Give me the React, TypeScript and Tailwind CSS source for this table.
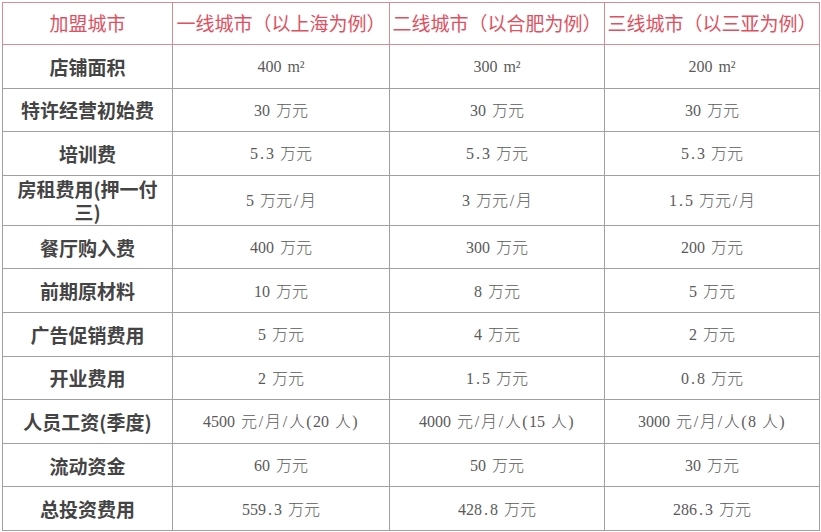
import React from "react";

type Row = { label: React.ReactNode; a: string; b: string; c: string; tall?: boolean };

const rows: Row[] = [
  { label: "店铺面积", a: "400 m²", b: "300 m²", c: "200 m²" },
  { label: "特许经营初始费", a: "30 万元", b: "30 万元", c: "30 万元" },
  { label: "培训费", a: "5.3 万元", b: "5.3 万元", c: "5.3 万元" },
  {
    label: (
      <>
        房租费用(押一付
        <br />
        三)
      </>
    ),
    a: "5 万元/月",
    b: "3 万元/月",
    c: "1.5 万元/月",
    tall: true,
  },
  { label: "餐厅购入费", a: "400 万元", b: "300 万元", c: "200 万元" },
  { label: "前期原材料", a: "10 万元", b: "8 万元", c: "5 万元" },
  { label: "广告促销费用", a: "5 万元", b: "4 万元", c: "2 万元" },
  { label: "开业费用", a: "2 万元", b: "1.5 万元", c: "0.8 万元" },
  { label: "人员工资(季度)", a: "4500 元/月/人(20 人)", b: "4000 元/月/人(15 人)", c: "3000 元/月/人(8 人)" },
  { label: "流动资金", a: "60 万元", b: "50 万元", c: "30 万元" },
  { label: "总投资费用", a: "559.3 万元", b: "428.8 万元", c: "286.3 万元" },
];

const sans = { fontFamily: '"Noto Sans CJK SC", sans-serif' };
const serif = { fontFamily: '"Liberation Serif", serif' };

// digits and punctuation sit in 8px slots, like the Song face in the shot
function Value({ text }: { text: string }) {
  return (
    <>
      {Array.from(text).map((ch, i) => {
        if (ch === " ") return <span key={i} className="inline-block w-[6px]" />;
        if (ch === "m" || ch === "²")
          return (
            <span key={i} style={serif}>
              {ch}
            </span>
          );
        if (/[\x21-\x7e]/.test(ch))
          return (
            <span key={i} style={serif} className="inline-block w-[8px] text-center">
              {ch}
            </span>
          );
        return (
          <span key={i} style={sans} className="font-light">
            {ch}
          </span>
        );
      })}
    </>
  );
}

export default function App() {
  return (
    <main className="min-h-screen bg-white pl-[2px] pt-[2px]">
      <table className="w-[817px] table-fixed border-collapse">
        <colgroup>
          <col className="w-[170px]" />
          <col className="w-[217px]" />
          <col className="w-[215px]" />
          <col className="w-[215px]" />
        </colgroup>
        <thead>
          <tr className="h-[42px]">
            {["加盟城市", "一线城市（以上海为例）", "二线城市（以合肥为例）", "三线城市（以三亚为例）"].map((h) => (
              <th
                key={h}
                style={sans}
                className="border border-[#dc8a94] p-0 text-center text-[19px] font-normal whitespace-nowrap text-[#e0505e]"
              >
                {h}
              </th>
            ))}
          </tr>
        </thead>
        <tbody>
          {rows.map((r, i) => (
            <tr key={i} className={r.tall ? "h-[50px]" : "h-[43.6px]"}>
              <td
                style={sans}
                className="border border-[#a0a0a0] px-1 text-center text-[19px] leading-[23px] font-bold text-[#444]"
              >
                {r.label}
              </td>
              {[r.a, r.b, r.c].map((v, j) => (
                <td
                  key={j}
                  className="border border-[#a0a0a0] p-0 text-center text-[16px] whitespace-nowrap text-[#5a5a5a]"
                >
                  <Value text={v} />
                </td>
              ))}
            </tr>
          ))}
        </tbody>
      </table>
    </main>
  );
}
